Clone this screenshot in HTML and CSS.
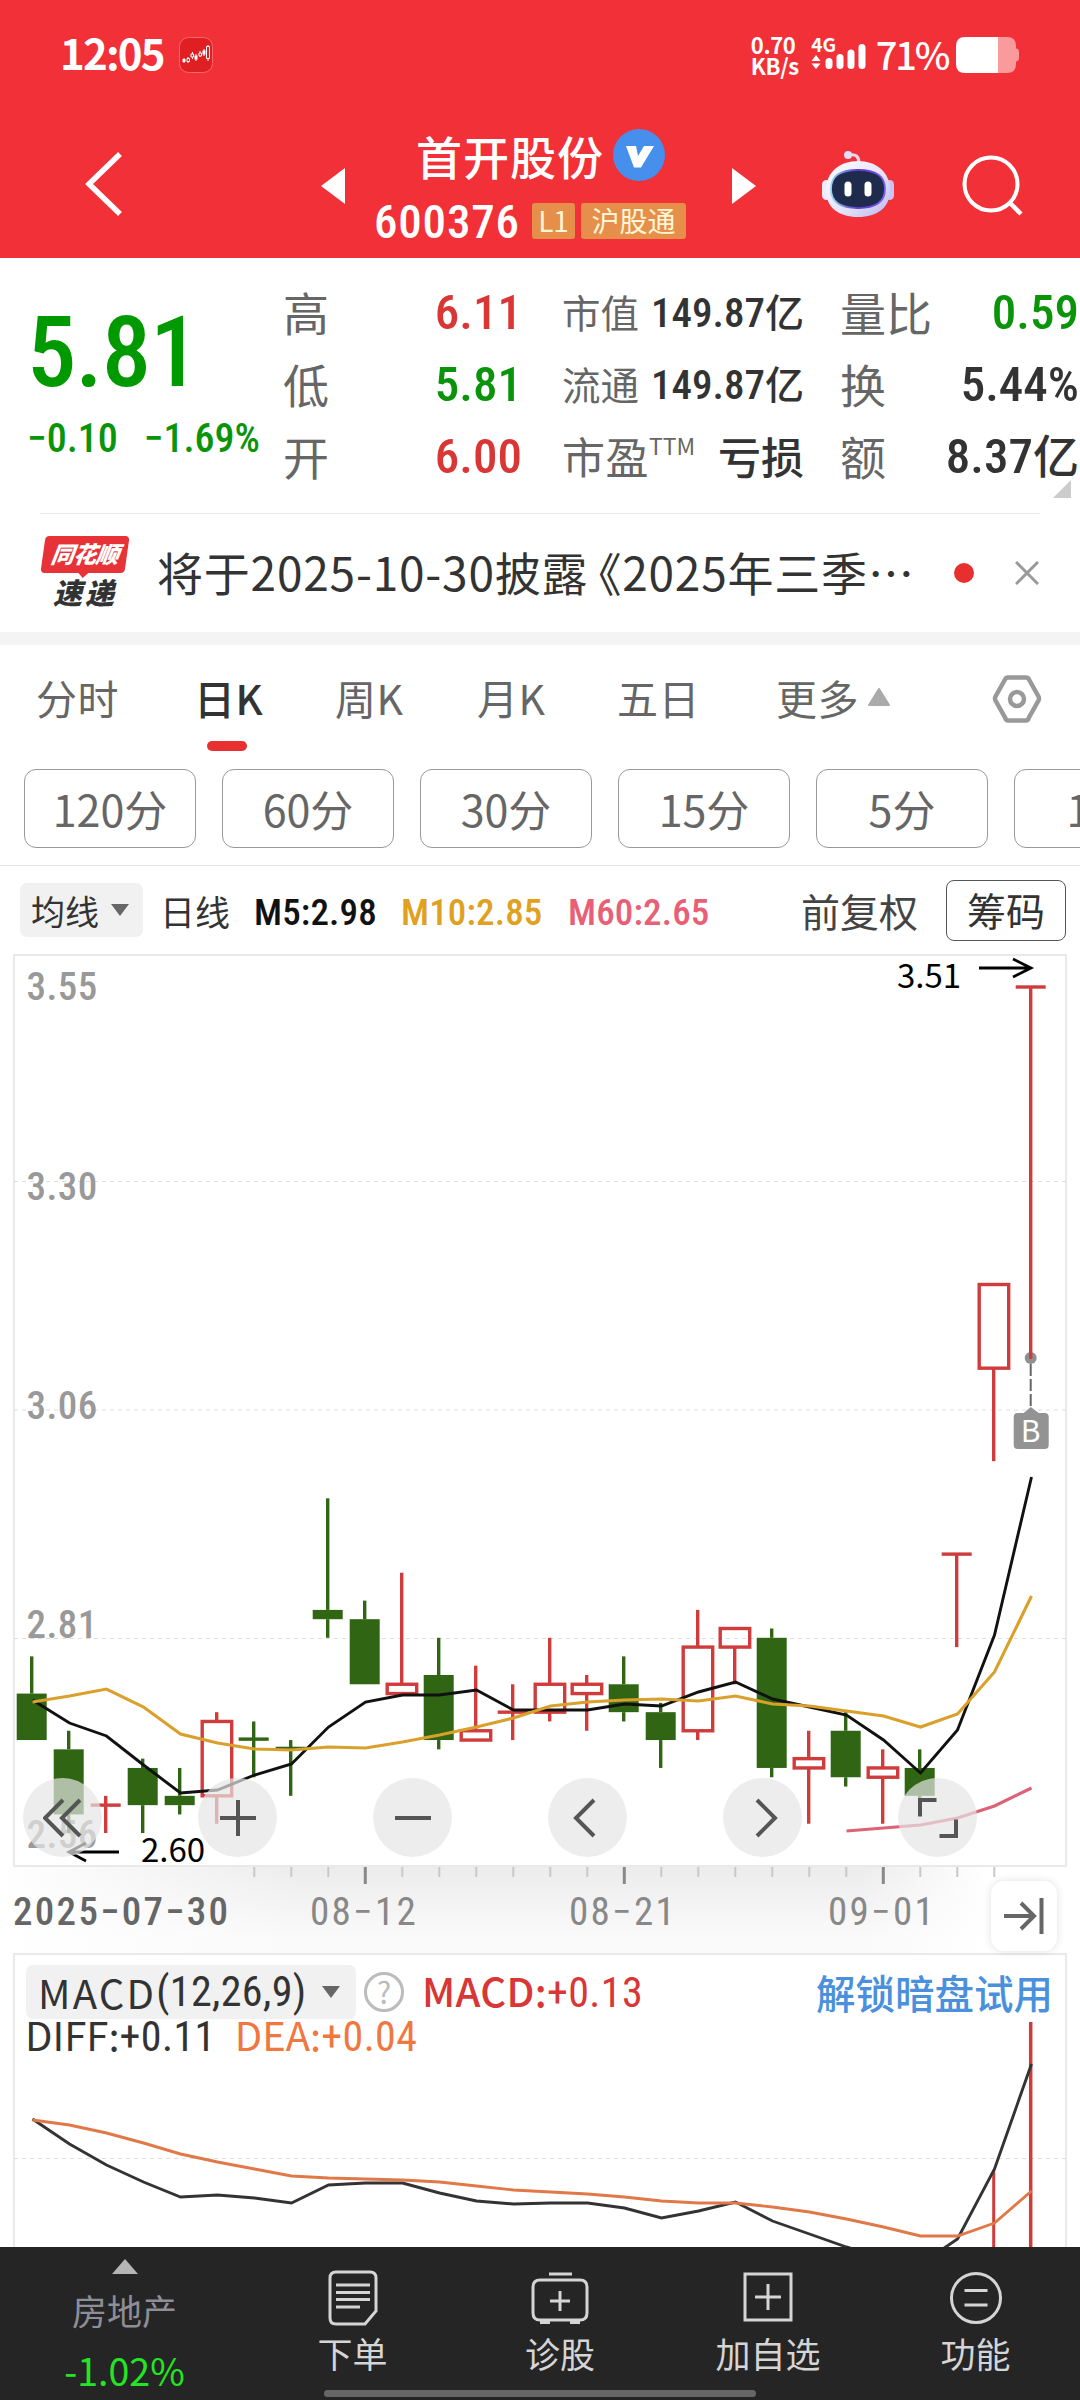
FILE: index.html
```html
<!DOCTYPE html>
<html lang="zh-CN">
<head>
    <meta charset="UTF-8">
    <meta name="viewport" content="width=device-width, initial-scale=1.0">
    <title>首开股份 600376</title>
    <link rel="stylesheet" href="styles.css">
</head>
<body>
<div class="phone">
    <header class="header">
        <div class="status">
            <span class="clock">12:05</span>
            <svg class="app-icon" width="34" height="36" viewBox="0 0 34 36">
                <rect x=".5" y=".5" width="33" height="35" rx="9" fill="#e01f22" stroke="#f4676a"/>
                <path d="M5 21v5M9 20v6M13.500 15v7M17 17v7M21 14v6M25 12v7M29 8v16" stroke="#fff" stroke-width="1"/>
                <path d="M3.500 22h3v3h-3zM15.500 18.500h3v4h-3zM23.500 13.500h3v4h-3z" fill="#fff"/>
                <path d="M8 21.500h2.500v3H8zM12 17h2.500v3H12zM20 16h2.500v3H20zM27.500 9.500h3v12h-3z" fill="#e01f22" stroke="#fff"/>
            </svg>
            <div class="speed"><b>0.70</b><b>KB/s</b></div>
            <div class="signal">
                <b>4G</b>
                <svg width="56" height="28" viewBox="0 12 56 28">
                    <path d="M0.500 30L5 24l4.500 6zM0.500 32.500L5 38l4.500-5.500z" fill="#fff"/>
                    <path d="M18 30.500v4M29 26.500v8M40 22v12.500M51 16.500v18" stroke="#fff" stroke-width="7" stroke-linecap="round"/>
                </svg>
            </div>
            <span class="percent">71%</span>
            <svg class="battery" width="64" height="36" viewBox="0 0 64 36">
                <path d="M42 0h9q9 0 9 9v2.500q3 0 3 4v5q0 4-3 4V27q0 9-9 9h-9z" fill="#f99a9d"/>
                <path d="M9 0h33v36H9q-9 0-9-9V9q0-9 9-9z" fill="#fff"/>
            </svg>
        </div>
        <div class="title-bar">
            <svg class="back" width="40" height="66" viewBox="0 0 40 66">
                <path d="M35 3L4 33l31 30" fill="none" stroke="#fff" stroke-width="5.500"/>
            </svg>
            <svg class="prev" width="24" height="36"><path d="M24 0v36L0 18z" fill="#fff"/></svg>
            <div class="stock">
                <div class="stock-name">首开股份
                    <svg width="52" height="52" viewBox="0 0 52 52">
                        <circle cx="26" cy="26" r="26" fill="#478fec"/>
                        <path d="M13 17h10l2 10 6-10h10L28 38.500h-7z" fill="#fff"/>
                    </svg>
                </div>
                <div class="stock-code"><span class="num">600376</span><span class="tag">L1</span><span class="tag wide">沪股通</span></div>
            </div>
            <svg class="next" width="24" height="36"><path d="M0 0v36l24-18z" fill="#fff"/></svg>
            <svg class="robot" width="72" height="68" viewBox="0 0 72 68">
                <defs>
                    <linearGradient id="shell" x1="0" y1="0" x2="1" y2="1">
                        <stop offset="0" stop-color="#fff"/><stop offset=".6" stop-color="#e4e0fa"/><stop offset="1" stop-color="#b9b6ee"/>
                    </linearGradient>
                    <linearGradient id="rim" x1="0" y1="0" x2="1" y2="0">
                        <stop offset="0" stop-color="#8fd5f5"/><stop offset=".5" stop-color="#5a35c8"/><stop offset="1" stop-color="#7b5df0"/>
                    </linearGradient>
                </defs>
                <path d="M27 5q10-2 10 8" fill="none" stroke="#e8d8ee" stroke-width="3"/>
                <circle cx="26" cy="5" r="4" fill="#e3e0f5"/>
                <rect x="0" y="30" width="9" height="20" rx="4.500" fill="#efeafc"/>
                <rect x="63" y="30" width="9" height="20" rx="4.500" fill="#c9c4f3"/>
                <path d="M36 11c18 0 32 11 32 29S55 67 36 67 4 58 4 40s14-29 32-29z" fill="url(#shell)"/>
                <path d="M36 20c20 0 27 7 27 19s-9 19-27 19S9 51 9 39s7-19 27-19z" fill="#1f2b4d" stroke="url(#rim)" stroke-width="1.800"/>
                <path d="M26 35v8M46 35v8" stroke="#fff" stroke-width="7" stroke-linecap="round"/>
            </svg>
            <svg class="search" width="62" height="64" viewBox="0 0 62 64">
                <circle cx="29" cy="30" r="26.500" fill="none" stroke="#fff" stroke-width="4"/>
                <path d="M47 48l12 12" stroke="#fff" stroke-width="4.500"/>
            </svg>
        </div>
    </header>

    <section class="quote">
        <div class="price down">
            <div class="last num">5.81</div>
            <div class="change num"><span>−0.10</span><span>−1.69%</span></div>
        </div>
        <dl class="facts">
            <div><dt>高</dt><dd class="num up">6.11</dd></div>
            <div><dt>低</dt><dd class="num down">5.81</dd></div>
            <div><dt>开</dt><dd class="num up">6.00</dd></div>
        </dl>
        <dl class="facts small">
            <div><dt>市值</dt><dd class="num">149.87<i>亿</i></dd></div>
            <div><dt>流通</dt><dd class="num">149.87<i>亿</i></dd></div>
            <div><dt class="big">市盈<sup>TTM</sup></dt><dd class="loss">亏损</dd></div>
        </dl>
        <dl class="facts">
            <div><dt>量比</dt><dd class="num down">0.59</dd></div>
            <div><dt>换</dt><dd class="num">5.44%</dd></div>
            <div><dt>额</dt><dd class="num">8.37<i>亿</i></dd></div>
        </dl>
        <svg class="expand" width="18" height="18"><path d="M18 0v18H0z" fill="#ccc"/></svg>
    </section>

    <section class="news">
        <div class="news-logo"><span class="logo-top">同花顺</span><span class="logo-bottom">速递</span></div>
        <p>将于2025-10-30披露<span class="book">《</span>2025年三季⋯</p>
        <span class="dot"></span>
        <svg width="24" height="24" viewBox="0 0 24 24"><path d="M1 1l22 22M23 1L1 23" stroke="#999" stroke-width="3"/></svg>
    </section>

    <nav class="tabs">
        <a>分时</a>
        <a class="active">日K</a>
        <a>周K</a>
        <a>月K</a>
        <a>五日</a>
        <a>更多<svg width="22" height="18"><path d="M11 1L21 17H1z" fill="#aaa" stroke="#aaa" stroke-width="2" stroke-linejoin="round"/></svg></a>
        <svg class="gear" width="50" height="48" viewBox="0 0 50 48">
            <path d="M16 2.500h18q2 0 3 2l9.500 17q1 2 0 4l-9.500 17q-1 3-3 3H16q-2 0-3-3l-9.500-17q-1-2 0-4l9.500-17q1-2 3-2z" fill="none" stroke="#999" stroke-width="4.500"/>
            <circle cx="25" cy="24" r="7" fill="none" stroke="#999" stroke-width="4.500"/>
        </svg>
    </nav>
    <div class="periods">
        <span>120分</span><span>60分</span><span>30分</span><span>15分</span><span>5分</span><span>1分</span>
    </div>

    <div class="ma-bar">
        <span class="select">均线<svg width="18" height="12"><path d="M0 0h18L9 12z" fill="#666"/></svg></span>
        <span class="line-name">日线</span>
        <span class="num ma5">M5:2.98</span>
        <span class="num ma10">M10:2.85</span>
        <span class="num ma60">M60:2.65</span>
        <span class="adjust">前复权</span>
        <span class="chips">筹码</span>
    </div>

    <section class="chart">
        <svg id="kline" width="1080" height="913" viewBox="0 954 1080 913"></svg>
        <div class="tools">
            <span><svg viewBox="0 0 40 40"><path d="M20 2L2 20l18 18M37 2L19 20l18 18"/></svg></span>
            <span><svg viewBox="0 0 40 40"><path d="M20 2v36M2 20h36"/></svg></span>
            <span><svg viewBox="0 0 40 40"><path d="M2 20h36"/></svg></span>
            <span><svg viewBox="0 0 40 40"><path d="M26 2L8 20l18 18"/></svg></span>
            <span><svg viewBox="0 0 40 40"><path d="M14 2l18 18-18 18"/></svg></span>
            <span><svg viewBox="0 0 40 40"><path d="M2 18.500V2h16.500M38 21.500V38H21.500"/></svg></span>
        </div>
    </section>

    <section class="axis">
        <svg id="ticks" width="1080" height="18"></svg>
        <div class="dates num"><b>2025−07−30</b><span>08−12</span><span>08−21</span><span>09−01</span></div>
        <div class="to-end">
            <svg width="40" height="36" viewBox="0 0 40 36"><path d="M0 18h29M17 5l13 13-13 13M37.500 0v36" fill="none" stroke="#666" stroke-width="4"/></svg>
        </div>
    </section>

    <section class="macd">
        <svg id="macd" width="1080" height="294" viewBox="0 1953 1080 294"></svg>
        <div class="macd-head">
            <span class="select"><span class="wide-text">MACD</span><span class="num">(12,26,9)</span><svg width="18" height="12"><path d="M0 0h18L9 12z" fill="#666"/></svg></span>
            <span class="help">?</span>
            <span class="up">MACD:<span class="num">+0.13</span></span>
            <a>解锁暗盘试用</a>
        </div>
        <div class="macd-values">
            <span>DIFF:<span class="num">+0.11</span></span>
            <span class="dea">DEA:<span class="num">+0.04</span></span>
        </div>
    </section>

    <footer class="bottom">
        <div class="sector">
            <svg width="26" height="15"><path d="M13 0l13 15H0z" fill="#b5b5b5"/></svg>
            <span>房地产</span>
            <em>-1.02%</em>
        </div>
        <div class="item">
            <svg width="50" height="56" viewBox="0 0 50 56"><path d="M8 2h34q6 0 6 6v33L37 54H8q-6 0-6-6V8q0-6 6-6zM8 15h34M8 22.500h34M8 29.500h34M8 37h24"/></svg>
            下单
        </div>
        <div class="item">
            <svg width="58" height="56" viewBox="0 0 58 56"><path d="M18 4h23M9 10h40q7 0 7 7v26q0 7-7 7H9q-7 0-7-7V17q0-7 7-7zM29 21v20M19 31h20M9 52.500h10M39 52.500h10"/></svg>
            诊股
        </div>
        <div class="item">
            <svg width="50" height="56" viewBox="0 0 50 56"><path d="M2 4h46v46H2zM25 14v26M12 27h26"/></svg>
            加自选
        </div>
        <div class="item">
            <svg width="54" height="56" viewBox="0 0 54 56"><circle cx="27" cy="28" r="24.500"/><path d="M15.500 20.500h23M15.500 35h23"/></svg>
            功能
        </div>
        <div class="home-bar"></div>
    </footer>
</div>
<script src="chart.js"></script>
</body>
</html>
```
FILE: styles.css
```css
* {
    box-sizing: border-box;
}
body {
    margin: 0;
    background: #fff;
    font-family: "Noto Sans CJK SC", sans-serif;
    color: #333;
}
.phone {
    width: 1080px;
    height: 2400px;
    overflow: hidden;
    display: flex;
    flex-direction: column;
}
svg {
    display: block;
    flex: none;
}
.num {
    font-family: Roboto, "Noto Sans CJK SC", sans-serif;
    font-stretch: 75%;
    font-weight: 500;
}
.up {
    color: #d93636;
}
.down {
    color: #0a940a;
}

/* header */
.header {
    height: 258px;
    background: #f23038;
    color: #fff;
}
.status {
    height: 110px;
    padding: 0 60px 0 60px;
    display: flex;
    align-items: center;
}
.clock {
    width: 120px;
    font-size: 42px;
    line-height: 60px;
    font-weight: 700;
    letter-spacing: -1.800px;
    padding-bottom: 6px;
}
.speed {
    margin-left: 538px;
    width: 61px;
    font-size: 22px;
    line-height: 21px;
    letter-spacing: -.4px;
    display: flex;
    flex-direction: column;
}
.signal {
    width: 58px;
    font-size: 19px;
    line-height: 18px;
    padding-top: 1px;
    margin-right: 7px;
}
.signal svg {
    margin-top: -10px;
}
.signal b {
    display: block;
    margin-top: -6px;
}
.percent {
    width: 78px;
    margin-right: 3px;
    font-size: 38px;
    line-height: 60px;
    font-weight: 500;
    letter-spacing: -2.200px;
    padding-bottom: 3px;
}
.title-bar {
    height: 148px;
    padding: 0 56px 0 85px;
    display: flex;
    align-items: center;
}
.prev {
    margin-left: 196px;
    margin-top: 4px;
}
.stock {
    width: 365px;
    margin-left: 28px;
    padding-top: 14px;
}
.stock-name {
    height: 60px;
    margin-left: 43px;
    display: flex;
    align-items: center;
    gap: 9px;
    font-size: 46px;
    font-weight: 500;
    letter-spacing: 1px;
}
.stock-code {
    height: 72px;
    display: flex;
    align-items: center;
    font-size: 47px;
}
.stock-code .num {
    width: 159px;
    padding-left: 1px;
    letter-spacing: .8px;
}
.tag {
    width: 43px;
    height: 36px;
    margin-right: 6px;
    border-radius: 3px;
    background: #e58f4a;
    color: #fff6d8;
    font-size: 28px;
    line-height: 35px;
    text-align: center;
}
.tag.wide {
    width: 105px;
}
.next {
    margin-top: 4px;
}
.robot {
    margin-left: 66px;
}
.search {
    margin-left: 68px;
    margin-top: 4px;
}

/* quote */
.quote {
    position: relative;
    height: 256px;
    display: grid;
    grid-template-columns: 256px 239px 282px 1fr;
    padding: 19px 1px 0 27px;
}
.last {
    margin-top: 8px;
    font-size: 99px;
    line-height: 135px;
    letter-spacing: -1.200px;
    color: #009900;
}
.change {
    display: flex;
    gap: 26px;
    font-size: 40px;
    line-height: 40px;
    margin-top: -1px;
}
.facts {
    margin: 0;
    font-size: 46px;
}
.facts div {
    height: 72px;
    display: flex;
    justify-content: space-between;
    align-items: center;
}
.facts dt {
    color: #666;
    line-height: 72px;
    margin-top: -5px;
    white-space: nowrap;
}
.facts dd {
    margin: 0;
    font-size: 49px;
    line-height: 72px;
    white-space: nowrap;
}
.facts i {
    font: 500 46px/1 "Noto Sans CJK SC", sans-serif;
}
.facts:last-of-type {
    padding-left: 36px;
}
.facts.small {
    padding-left: 40px;
    font-size: 38.500px;
}
.small dd {
    font-size: 41px;
}
.small i {
    font-size: 39px;
}
.small .big {
    font-size: 43px;
    letter-spacing: .5px;
}
.small .loss {
    font-size: 43px;
    font-weight: 500;
    margin-top: -5px;
}
sup {
    font-size: 23px;
    line-height: 0;
    vertical-align: 19px;
    letter-spacing: 0;
}
.expand {
    position: absolute;
    right: 9px;
    bottom: 16px;
}

/* news */
.news {
    position: relative;
    height: 131px;
    padding-left: 43px;
    border-bottom: 13px solid #f4f4f4;
    display: flex;
    align-items: center;
}
.news::before {
    content: "";
    position: absolute;
    left: 40px;
    right: 40px;
    top: -1px;
    border-top: 1px solid #eaeaea;
}
.news-logo {
    width: 84px;
    text-align: center;
    font-weight: 900;
    font-style: italic;
    margin-right: 30px;
    margin-top: -1px;
}
.logo-top {
    position: relative;
    display: block;
    height: 37px;
    border-radius: 4px;
    background: #e73238;
    color: #fff;
    font-size: 23px;
    line-height: 35px;
    letter-spacing: -.5px;
    transform: skewX(-8deg);
}
.logo-top::after {
    content: "";
    position: absolute;
    left: 37px;
    top: 36px;
    border: 6px solid transparent;
    border-top-color: #e73238;
}
.logo-bottom {
    display: block;
    font-size: 29px;
    line-height: 36px;
    letter-spacing: 3px;
}
.news p {
    margin: -4px 0 0;
    width: 797px;
    font-size: 46px;
    letter-spacing: .8px;
    white-space: nowrap;
}
.book {
    margin-left: -13px;
}
.dot {
    width: 20px;
    height: 20px;
    border-radius: 50%;
    background: #e82f2f;
    margin-right: 41px;
}

/* tabs */
.tabs {
    height: 112px;
    padding: 0 0 8px 36px;
    display: grid;
    grid-template-columns: 158px 141px 142px 140px 159px 216px auto;
    align-items: center;
    font-size: 41px;
    color: #666;
}
.tabs a {
    display: flex;
    align-items: center;
    gap: 9px;
    letter-spacing: .5px;
}
.tabs .active {
    color: #333;
    font-weight: 500;
    position: relative;
}
.active::after {
    content: "";
    position: absolute;
    left: 13px;
    bottom: -24px;
    width: 40px;
    height: 10px;
    border-radius: 5px;
    background: #e93030;
}
.gear {
    margin-top: 4px;
}
.periods {
    height: 109px;
    padding: 12px 0 0 24px;
    display: flex;
    gap: 26px;
    overflow: hidden;
    border-bottom: 1px solid #e4e4e4;
}
.periods span {
    flex: none;
    width: 172px;
    height: 79px;
    border: 1px solid #999;
    border-radius: 12px;
    text-align: center;
    font-size: 43px;
    line-height: 76px;
    color: #666;
}
.ma-bar {
    height: 88px;
    padding: 0 14px 0 20px;
    display: flex;
    align-items: center;
    font-size: 34px;
    white-space: nowrap;
}
.select {
    height: 54px;
    border-radius: 7px;
    background: #f1f1f1;
    display: flex;
    align-items: center;
}
.ma-bar .select {
    width: 123px;
    padding-left: 11px;
    gap: 12px;
}
.ma-bar .num {
    font-size: 37px;
    letter-spacing: .15px;
    margin-top: 5px;
}
.line-name {
    width: 94px;
    margin-left: 17px;
    font-size: 35px;
}
.ma5 {
    width: 147px;
    color: #111;
}
.ma10 {
    width: 167px;
    color: #e0a020;
}
.ma60 {
    color: #e86075;
}
.adjust {
    margin-left: auto;
    margin-right: 28px;
    font-size: 39px;
    color: #444;
}
.chips {
    width: 120px;
    height: 61px;
    border: 1.500px solid #555;
    border-radius: 8px;
    text-align: center;
    font-size: 39px;
    line-height: 56px;
}

/* k-line */
.chart {
    position: relative;
    height: 913px;
}
.tools {
    position: absolute;
    left: 23px;
    bottom: 10px;
    width: 954px;
    display: flex;
    justify-content: space-between;
}
.tools span {
    width: 79px;
    height: 79px;
    border-radius: 50%;
    background: rgba(229, 229, 229, .7);
    display: flex;
    align-items: center;
    justify-content: center;
}
.tools svg {
    width: 40px;
    height: 40px;
    fill: none;
    stroke: #555;
    stroke-width: 4;
}
.grid {
    stroke: #ddd;
    stroke-dasharray: 4 4;
}
.label {
    font: 500 39px Roboto, sans-serif;
    font-stretch: 75%;
    letter-spacing: .5px;
    fill: #999;
}
.note {
    font: 33px "Noto Sans CJK SC", sans-serif;
    fill: #000;
}
.axis {
    position: relative;
    height: 86px;
    background: linear-gradient(90deg, #fff 0, rgba(255, 255, 255, 0) 300px, rgba(255, 255, 255, 0) 860px, #fff 990px), linear-gradient(#ececec, #fafafa 70px);
}
.dates {
    display: grid;
    grid-template-columns: 284px 259px 259px 160px;
    padding-left: 13px;
    font-size: 39px;
    line-height: 55px;
    letter-spacing: 2.300px;
    color: #888;
}
.dates b {
    font-weight: 500;
    color: #666;
}
.dates span {
    padding-left: 13px;
    font-weight: 450;
}
.to-end {
    position: absolute;
    right: 23px;
    top: 14px;
    width: 66px;
    height: 70px;
    border-radius: 13px;
    background: #fff;
    box-shadow: 0 0 8px rgba(0, 0, 0, .12);
    display: flex;
    align-items: center;
    justify-content: center;
}

/* macd */
.macd {
    height: 294px;
    display: grid;
    grid-template-rows: 66px 36px 1fr;
}
.macd > svg {
    grid-area: 1 / 1 / 4 / 2;
}
.macd-head {
    grid-area: 1 / 1;
    padding: 11px 27px 0 26px;
    display: flex;
    align-items: center;
    font-size: 40px;
    line-height: 54px;
}
.macd-head .select {
    width: 330px;
    padding-left: 12px;
}
.wide-text {
    letter-spacing: 2.200px;
}
.macd .num {
    font-size: 42px;
    font-weight: 430;
    letter-spacing: .4px;
}
.macd-head .select svg {
    margin-left: auto;
    margin-right: 16px;
}
.help {
    width: 40px;
    height: 40px;
    margin: 0 18px 0 8px;
    border: 3px solid #bbb;
    border-radius: 50%;
    color: #bbb;
    font-size: 30px;
    line-height: 32px;
    text-align: center;
}
.macd-head .up {
    font-weight: 450;
    letter-spacing: .3px;
}
.macd-head a {
    margin-left: auto;
    color: #4a90dd;
    font-size: 39.500px;
    font-weight: 500;
}
.macd-values {
    grid-area: 2 / 1;
    padding-left: 25px;
    display: flex;
    gap: 19px;
    font-size: 40px;
    line-height: 30px;
}
.dea {
    color: #f07840;
}

/* bottom bar */
.bottom {
    position: relative;
    height: 153px;
    padding-left: 21px;
    background: #252525;
    color: #d5d5d5;
    display: grid;
    grid-template-columns: 207px 249px 166px 250px 165px;
    font-size: 35px;
}
.item {
    display: flex;
    flex-direction: column;
    align-items: center;
    padding-top: 23px;
    line-height: 54px;
}
.item svg {
    fill: none;
    stroke: #d5d5d5;
    stroke-width: 3;
}
.sector {
    display: flex;
    flex-direction: column;
    align-items: center;
    padding-top: 12px;
    color: #8e8e98;
    line-height: 36px;
}
.sector span {
    margin-top: 18px;
}
.sector em {
    margin-top: 24px;
    font-style: normal;
    font-size: 37.500px;
    color: #23e523;
}
.home-bar {
    position: absolute;
    left: 324px;
    bottom: 3px;
    width: 432px;
    height: 7px;
    border-radius: 4px;
    background: #666;
}
```
FILE: chart.js
```js
// open, high, low, close
const days = [
    [2.75, 2.79, 2.70, 2.70], [2.69, 2.71, 2.60, 2.62], [2.63, 2.64, 2.60, 2.63], [2.67, 2.68, 2.60, 2.63],
    [2.64, 2.67, 2.62, 2.63], [2.64, 2.73, 2.61, 2.72], [2.701, 2.72, 2.66, 2.70], [2.691, 2.70, 2.64, 2.69],
    [2.84, 2.96, 2.81, 2.83], [2.83, 2.85, 2.76, 2.76], [2.75, 2.88, 2.75, 2.76], [2.77, 2.81, 2.69, 2.70],
    [2.70, 2.78, 2.70, 2.71], [2.73, 2.76, 2.70, 2.73], [2.73, 2.81, 2.72, 2.76], [2.75, 2.77, 2.71, 2.76],
    [2.76, 2.79, 2.72, 2.73], [2.73, 2.74, 2.67, 2.70], [2.71, 2.84, 2.70, 2.80], [2.80, 2.82, 2.76, 2.82],
    [2.81, 2.82, 2.66, 2.67], [2.67, 2.71, 2.61, 2.68], [2.71, 2.73, 2.65, 2.66], [2.66, 2.69, 2.61, 2.67],
    [2.67, 2.69, 2.63, 2.64], [2.90, 2.90, 2.80, 2.90], [3.10, 3.19, 3.00, 3.19], [3.51, 3.51, 3.11, 3.51]
];
const ma5 = [1700, 1723, 1736, 1765, 1793, 1790, 1775, 1764, 1727, 1702, 1695, 1695, 1690, 1710, 1710, 1710, 1704, 1706, 1692, 1682, 1699, 1707, 1715, 1740, 1773, 1730, 1635, 1477];
const ma10 = [1702, 1696, 1689, 1707, 1734, 1743, 1749, 1750, 1747, 1748, 1742, 1735, 1727, 1718, 1706, 1702, 1700, 1699, 1701, 1696, 1704, 1706, 1711, 1716, 1727, 1714, 1672, 1596];
const ma60 = [1831, 1828, 1825, 1818, 1806, 1788];
const diff = [2119, 2144, 2165, 2182, 2197, 2195, 2198, 2203, 2185, 2183, 2183, 2193, 2201, 2204, 2203, 2203, 2208, 2218, 2211, 2202, 2221, 2234, 2247, 2258, 2264, 2239, 2169, 2064];
const dea = [2120, 2125, 2133, 2143, 2154, 2162, 2169, 2176, 2178, 2179, 2180, 2182, 2186, 2190, 2192, 2194, 2197, 2201, 2203, 2203, 2207, 2212, 2219, 2227, 2236, 2236, 2223, 2191];

const RED = "#d03c3c";
const GREEN = "#306613";
const px = i => 31.7 + i * 37;
const py = price => 987 + (3.51 - price) * 929.7;

const line = (x1, y1, x2, y2, attrs) => `<line x1="${x1}" y1="${y1}" x2="${x2}" y2="${y2}" ${attrs}/>`;
const curve = (ys, color, start = 0, width = 2.9) => {
    const pts = ys.map((y, i) => `${px(i + start) + 0.8},${y}`).join(" ");
    return `<polyline points="${pts}" fill="none" stroke="${color}" stroke-width="${width}"/>`;
};

function candle([open, high, low, close], i) {
    const x = px(i);
    const up = close >= open;
    const color = up ? RED : GREEN;
    const top = py(Math.max(open, close));
    const bottom = py(Math.min(open, close));
    const stroke = `stroke="${color}" stroke-width="3.4"`;
    let out = line(x, py(high), x, top, stroke) + line(x, bottom, x, py(low), stroke);
    if (bottom - top < 3) {
        out += line(x - 15, top, x + 15, top, stroke);
    } else if (up) {
        out += `<rect x="${x - 14.5}" y="${top}" width="29.5" height="${bottom - top}" fill="none" ${stroke}/>`;
    } else {
        out += `<rect x="${x - 15}" y="${top}" width="30" height="${bottom - top}" fill="${color}"/>`;
    }
    return out;
}

let k = `<rect x="14" y="955" width="1052" height="911" fill="none" stroke="#e9e9e9" stroke-width="2"/>`;
[1181.5, 1410, 1638.5].forEach(y => k += line(14, y, 1066, y, 'class="grid"'));
[["3.55", 1000], ["3.30", 1200], ["3.06", 1419], ["2.81", 1638], ["2.56", 1848]].forEach(([t, y]) => {
    k += `<text x="26.5" y="${y}" class="label">${t}</text>`;
});
k += `<circle cx="1030.700" cy="1358" r="6" fill="#909090"/>`;
k += days.map(candle).join("");
k += curve(ma5, "#111") + curve(ma10, "#daa02c", 0, 3.1) + curve(ma60, "#dd6276", 22, 3.1);
// high and low marks
k += `<text x="897" y="988" class="note">3.51</text><path d="M979 968h50M1013 959l18 9-18 9" fill="none" stroke="#000" stroke-width="2.800"/>`;
k += `<text x="141" y="1862" class="note">2.60</text><path d="M119 1852H70M86 1843l-17 9 17 9" fill="none" stroke="#000" stroke-width="2.800"/>`;
// buy marker
k += line(1030.7, 1364, 1030.7, 1408, 'stroke="#666" stroke-width="2" stroke-dasharray="12 3"');
k += `<path d="M1030.700 1407l8 6h6q4 0 4 4v28q0 4-4 4h-27q-4 0-4-4v-28q0-4 4-4h6z" fill="#939393"/>`;
k += `<text x="1030.700" y="1442" text-anchor="middle" font-size="30" font-family="Noto Sans CJK SC" fill="#fff">B</text>`;
document.getElementById("kline").innerHTML = k;

let t = "";
for (let i = 6; i < 27; i++) {
    const major = i === 9 || i === 16 || i === 23;
    t += line(px(i) + 0.6, 0, px(i) + 0.6, major ? 17 : 10, `stroke="${major ? "#888" : "#c8c8c8"}" stroke-width="${major ? 3 : 2}"`);
}
document.getElementById("ticks").innerHTML = t;

let m = `<rect x="14" y="1954" width="1052" height="400" fill="#fff" stroke="#e9e9e9" stroke-width="2"/>`;
m += line(14, 2158.5, 1066, 2158.5, 'class="grid"');
m += line(px(26), 2170, px(26), 2260, `stroke="${RED}" stroke-width="3"`) + line(px(27), 2022, px(27), 2260, `stroke="${RED}" stroke-width="3.500"`);
m += curve(diff, "#333") + curve(dea, "#e07848");
document.getElementById("macd").innerHTML = m;
```
